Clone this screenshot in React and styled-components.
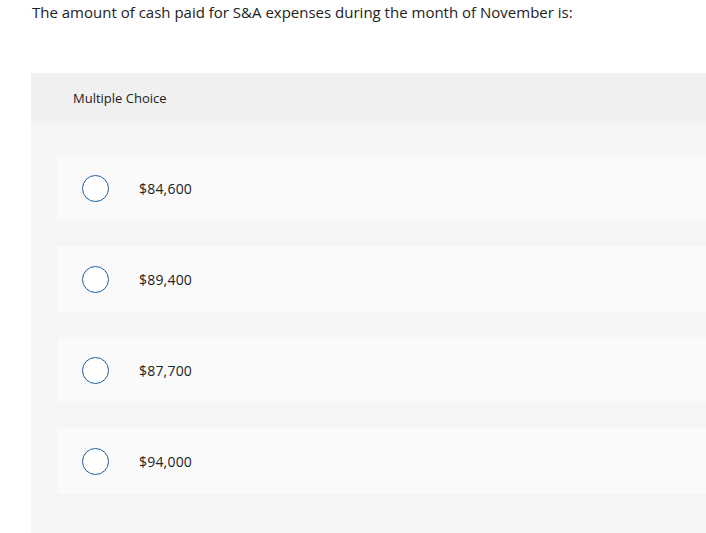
import styled, { createGlobalStyle } from "styled-components";

const GlobalStyle = createGlobalStyle`
  body {
    margin: 0;
    background: #fff;
    font-family: "Open Sans", "Liberation Sans", sans-serif;
    color: #222;
  }
`;

const Page = styled.div`
  padding: 0 0 0 31px;
`;

const Question = styled.p`
  margin: 0;
  padding: 2px 0 0 1px;
  height: 71px;
  font-size: 15px;
  line-height: 20px;
  color: #222;
`;

const Panel = styled.section`
  background: #f5f5f5;
  padding-bottom: 39px;
`;

const PanelHeader = styled.div`
  background: #f0f0f0;
  height: 50px;
  display: flex;
  align-items: center;
  padding-left: 42px;
  font-size: 13px;
  color: #222;
`;

const Options = styled.div`
  display: flex;
  flex-direction: column;
  gap: 25px;
  padding: 32px 0 0 26px;
`;

const Option = styled.label`
  display: flex;
  align-items: center;
  height: 66px;
  background: #fafafa;
  border-radius: 3px 0 0 3px;
  padding-left: 25px;
  cursor: pointer;
`;

const Radio = styled.span`
  width: 25px;
  height: 25px;
  border: 1.5px solid #1b5e9e;
  border-radius: 50%;
  background: #fff;
  flex-shrink: 0;
`;

const Answer = styled.span`
  margin-left: 30px;
  font-size: 14px;
  letter-spacing: 0.2px;
  color: #222;
`;

const answers = ["$84,600", "$89,400", "$87,700", "$94,000"];

const App = () => (
  <Page>
    <GlobalStyle />
    <Question>
      The amount of cash paid for S&amp;A expenses during the month of November is:
    </Question>
    <Panel>
      <PanelHeader>Multiple Choice</PanelHeader>
      <Options>
        {answers.map((a) => (
          <Option key={a}>
            <Radio />
            <Answer>{a}</Answer>
          </Option>
        ))}
      </Options>
    </Panel>
  </Page>
);

export default App;
